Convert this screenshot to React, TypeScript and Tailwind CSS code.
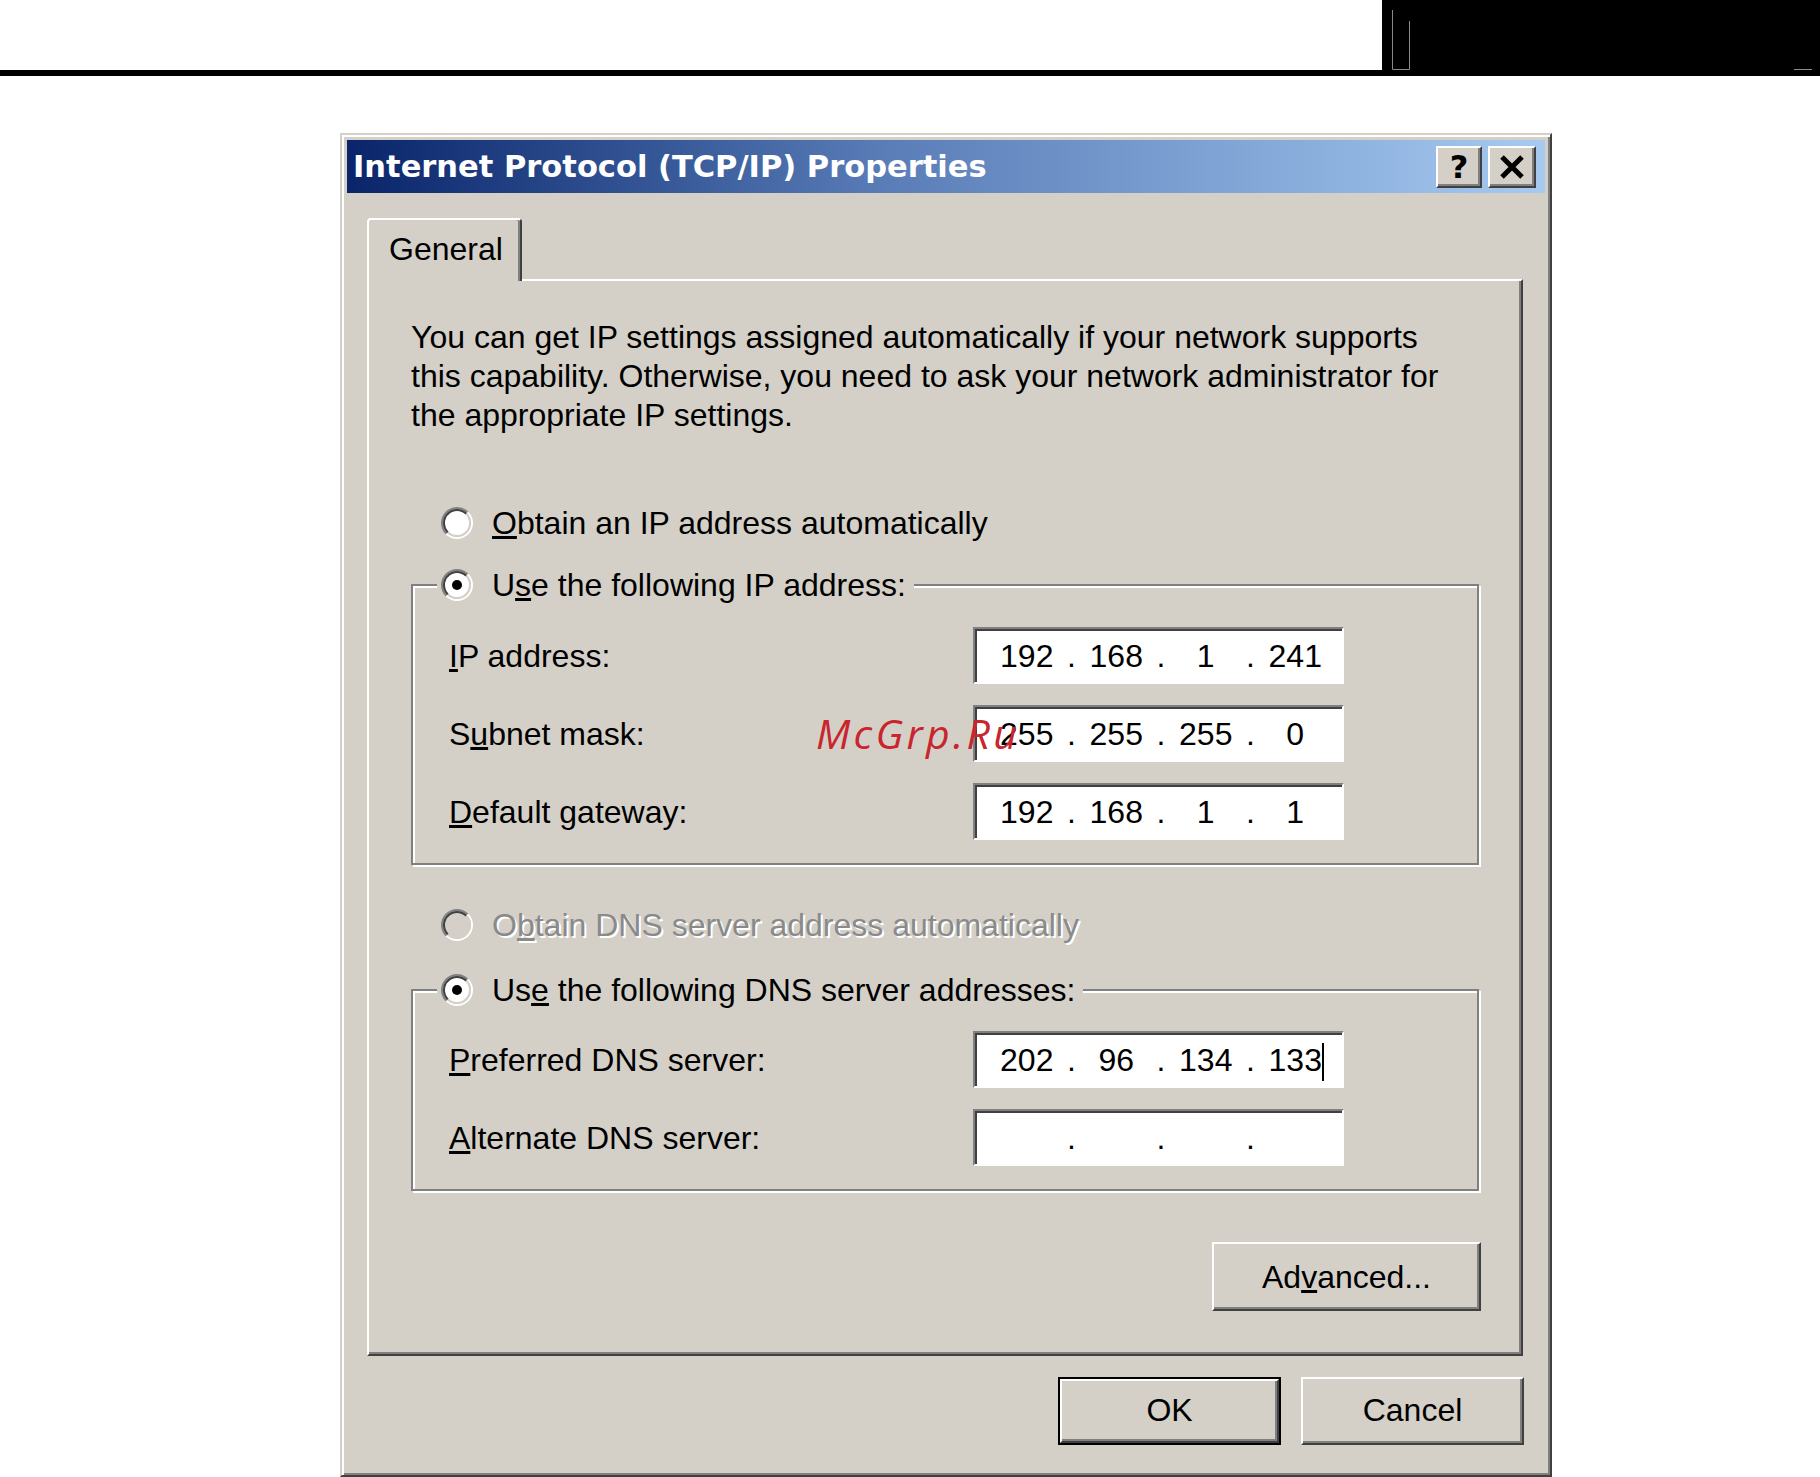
import React from 'react';

// classic win2k bevels
const RAISED =
  'border-2 border-t-white border-l-white border-r-[#404040] border-b-[#404040] shadow-[inset_-2px_-2px_0_#808080]';
const SUNKEN =
  'border-2 border-t-[#808080] border-l-[#808080] border-r-white border-b-white shadow-[inset_2px_2px_0_#404040]';
const ETCHED = 'border-2 border-[#808080] shadow-[inset_2px_2px_0_#fff,2px_2px_0_#fff]';

const Radio: React.FC<{ checked?: boolean; disabled?: boolean }> = ({ checked, disabled }) => (
  <span className="flex w-[32px] h-[32px] shrink-0 rounded-full border-2 border-t-[#808080] border-l-[#808080] border-r-white border-b-white">
    <span
      className={`flex flex-1 items-center justify-center rounded-full border-2 border-t-[#404040] border-l-[#404040] border-r-[#d4d0c8] border-b-[#d4d0c8] ${
        disabled ? 'bg-[#d4d0c8]' : 'bg-white'
      }`}
    >
      {checked && <span className="w-[10px] h-[10px] rounded-full bg-black" />}
    </span>
  </span>
);

const IpBox: React.FC<{ parts: string[]; caret?: boolean }> = ({ parts, caret }) => (
  <div className={`flex items-center w-[371px] h-[57px] bg-white pl-[7px] pr-[2px] ${SUNKEN}`}>
    {parts.map((p, i) => (
      <React.Fragment key={i}>
        {i > 0 && <span className="flex w-0 justify-center">.</span>}
        <span className="flex-1 text-center">
          {p}
          {caret && i === 3 && (
            <span className="inline-block w-[2px] h-[38px] -mr-[2px] bg-black align-middle" />
          )}
        </span>
      </React.Fragment>
    ))}
  </div>
);

const Row: React.FC<{ label: React.ReactNode; parts: string[]; caret?: boolean }> = ({ label, parts, caret }) => (
  <div className="flex items-center h-[57px]">
    <span className="w-[524px]">{label}</span>
    <IpBox parts={parts} caret={caret} />
  </div>
);

const Group: React.FC<{ legend: React.ReactNode; children: React.ReactNode; className?: string; top?: string }> = ({
  legend,
  children,
  className = '',
  top = 'pt-[22px]',
}) => (
  <fieldset className={`m-0 p-0 ${ETCHED} ${className}`}>
    <legend className="ml-[24px] pl-[4px] pr-[8px] bg-[#d4d0c8]">
      <span className="flex items-center h-[40px] gap-[19px]">
        <Radio checked />
        <span>{legend}</span>
      </span>
    </legend>
    <div className={`flex flex-col gap-[21px] pl-[36px] pb-[23px] ${top}`}>{children}</div>
  </fieldset>
);

export default function App() {
  return (
    <div className="relative h-[1477px] overflow-hidden bg-white text-black text-[32px] font-['Liberation_Sans',Arial,sans-serif]">
      {/* page header strip */}
      <div className="flex h-[70px]">
        <div className="flex-1" />
        <div className="w-[438px] bg-black">
          <svg width="438" height="70" viewBox="0 0 438 70">
            <path d="M10.5 10V69.5H27.5V21" fill="none" stroke="#8a8a8a" strokeWidth="1" />
            <path d="M412 69.5H430" stroke="#8a8a8a" strokeWidth="1" />
          </svg>
        </div>
      </div>
      <div className="h-[6px] bg-black" />

      {/* dialog */}
      <div className="ml-[340px] mt-[57px] w-[1212px] h-[1344px] flex flex-col p-[5px] bg-[#d4d0c8] border-2 border-t-[#d4d0c8] border-l-[#d4d0c8] border-r-[#404040] border-b-[#404040] shadow-[inset_2px_2px_0_#fff,inset_-2px_-2px_0_#808080]">
        {/* title bar */}
        <div className="flex items-center justify-between h-[53px] pl-[6px] pr-[9px] bg-linear-to-r from-[#0a246a] via-[#5a7db8] via-45% to-[#a6caf0]">
          <span className="text-white font-bold text-[30.5px] font-['DejaVu_Sans',sans-serif]">
            Internet Protocol (TCP/IP) Properties
          </span>
          <div className="flex gap-[6px]">
            <div className={`flex items-center justify-center w-[46px] h-[42px] bg-[#d4d0c8] ${RAISED}`}>
              <span className="font-bold text-[32px] leading-none font-['DejaVu_Sans',sans-serif]">?</span>
            </div>
            <div className={`flex items-center justify-center w-[48px] h-[42px] bg-[#d4d0c8] ${RAISED}`}>
              <svg width="26" height="24" viewBox="0 0 26 24">
                <path d="M3 2L23 22M23 2L3 22" stroke="#000" strokeWidth="5" />
              </svg>
            </div>
          </div>
        </div>

        <div className="flex flex-col pt-[25px] pl-[20px] pr-[22px]">
          {/* tab */}
          <div className="flex">
            <div className="relative z-10 -mb-[2px] flex items-center w-[155px] h-[63px] pl-[20px] pb-[4px] rounded-t-[4px] bg-[#d4d0c8] border-t-2 border-l-2 border-r-2 border-t-white border-l-white border-r-[#404040] shadow-[inset_-2px_0_0_#808080]">
              General
            </div>
          </div>

          {/* tab page */}
          <div className={`flex flex-col h-[1077px] pl-[42px] pr-[42px] pt-[37px] bg-[#d4d0c8] ${RAISED}`}>
            <p className="leading-[39px] whitespace-nowrap">
              You can get IP settings assigned automatically if your network supports
              <br />
              this capability. Otherwise, you need to ask your network administrator for
              <br />
              the appropriate IP settings.
            </p>

            <div className="flex items-center h-[40px] gap-[19px] pl-[30px] mt-[68px]">
              <Radio />
              <span>
                <u>O</u>btain an IP address automatically
              </span>
            </div>

            <Group
              className="mt-[22px]"
              legend={
                <>
                  U<u>s</u>e the following IP address:
                </>
              }
            >
              <Row label={<><u>I</u>P address:</>} parts={['192', '168', '1', '241']} />
              <Row label={<>S<u>u</u>bnet mask:</>} parts={['255', '255', '255', '0']} />
              <Row label={<><u>D</u>efault gateway:</>} parts={['192', '168', '1', '1']} />
            </Group>

            <div className="flex items-center h-[40px] gap-[19px] pl-[30px] mt-[40px]">
              <Radio disabled />
              <span className="text-[#8a8a8a] [text-shadow:2px_2px_0_#fff]">
                O<u>b</u>tain DNS server address automatically
              </span>
            </div>

            <Group
              className="mt-[25px]"
              top="pt-[21px]"
              legend={
                <>
                  Us<u>e</u> the following DNS server addresses:
                </>
              }
            >
              <Row label={<><u>P</u>referred DNS server:</>} parts={['202', '96', '134', '133']} caret />
              <Row label={<><u>A</u>lternate DNS server:</>} parts={['', '', '', '']} />
            </Group>

            <div className={`self-end -mr-[2px] mt-[51px] flex items-center justify-center w-[269px] h-[69px] ${RAISED}`}>
              <span>
                Ad<u>v</u>anced...
              </span>
            </div>
          </div>

          {/* dialog buttons */}
          <div className="flex justify-end gap-[20px] mt-[21px] mr-[-1px]">
            <div className="flex w-[223px] h-[68px] border-2 border-black">
              <div className={`flex flex-1 items-center justify-center pb-[3px] ${RAISED}`}>OK</div>
            </div>
            <div className={`flex items-center justify-center w-[223px] h-[68px] pb-[3px] ${RAISED}`}>Cancel</div>
          </div>
        </div>
      </div>

      {/* watermark */}
      <span className="absolute left-[816px] top-[713px] text-[41px] leading-none italic tracking-[0.08em] text-[#c9252c] font-['Open_Sans',sans-serif]">
        McGrp.Ru
      </span>
    </div>
  );
}
